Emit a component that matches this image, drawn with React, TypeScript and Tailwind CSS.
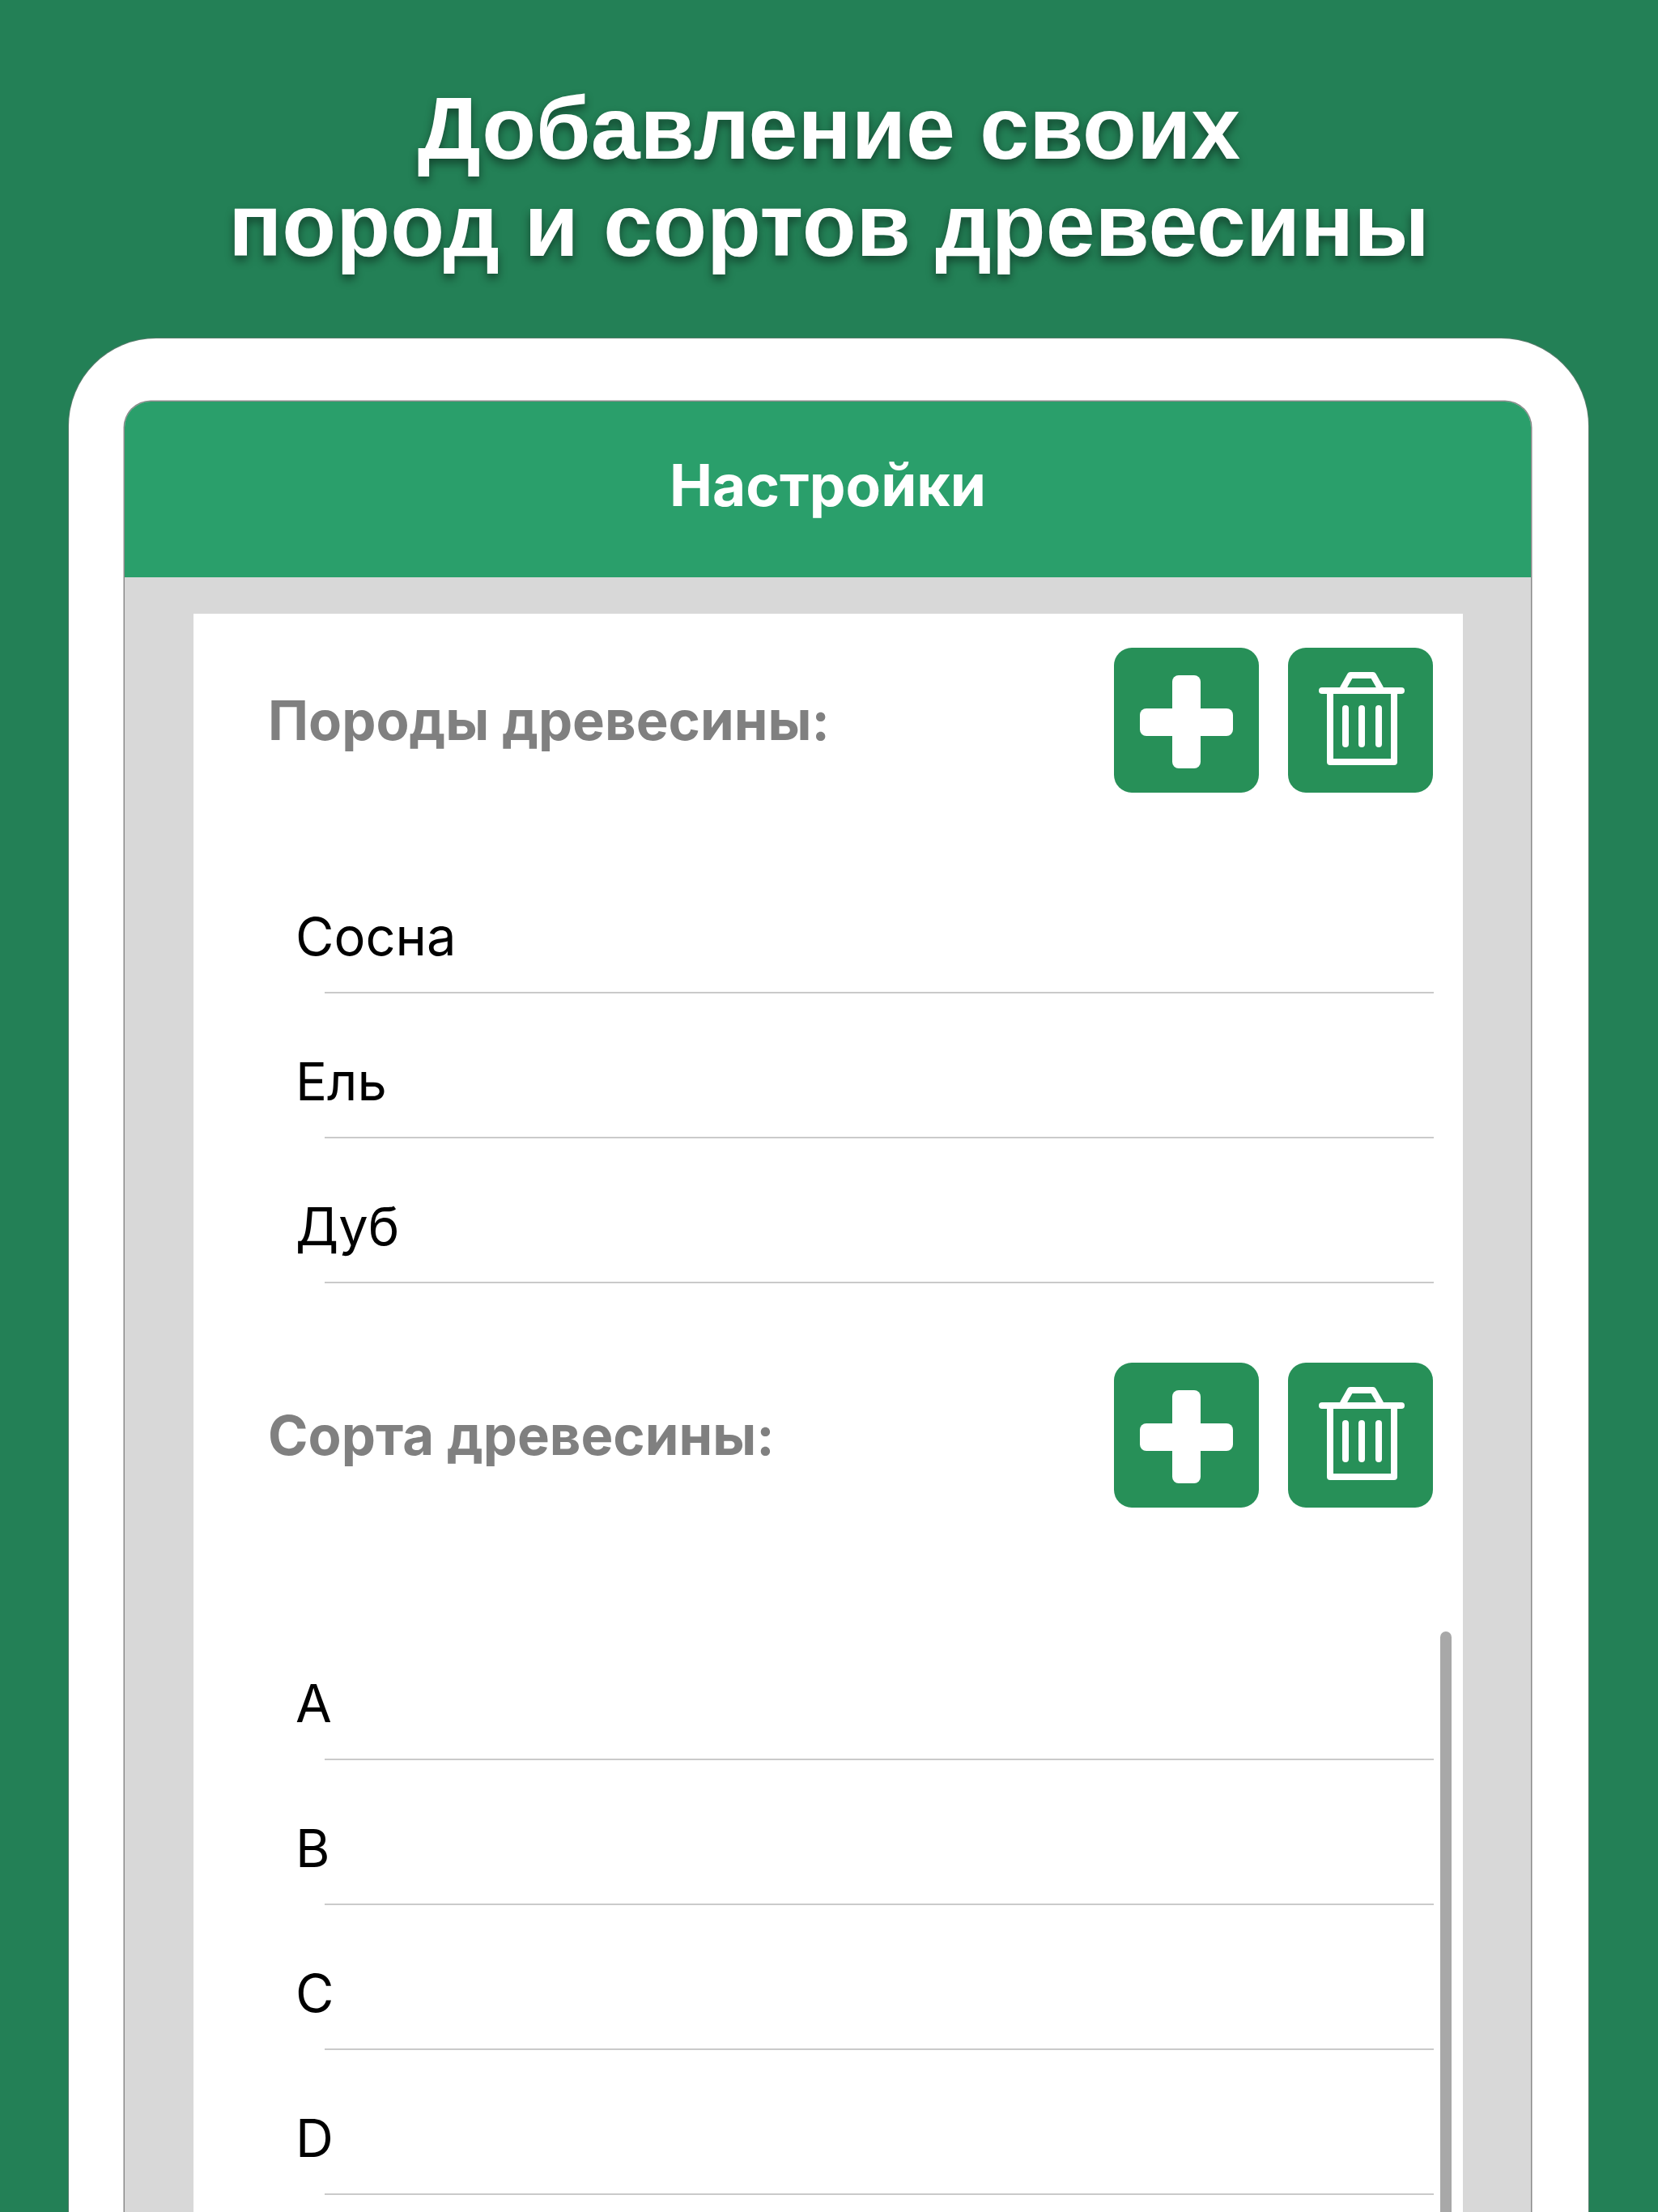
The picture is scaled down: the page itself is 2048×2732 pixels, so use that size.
const breeds = ['Сосна', 'Ель', 'Дуб']
const grades = ['A', 'B', 'C', 'D']

function PlusIcon() {
  return (
    <svg viewBox="0 0 179 179" className="w-[179px] h-[179px]" fill="#fff">
      <rect x="72" y="34" width="35" height="115" rx="8" />
      <rect x="32" y="75" width="115" height="34" rx="8" />
    </svg>
  )
}

function TrashIcon() {
  return (
    <svg viewBox="0 0 179 179" className="w-[179px] h-[179px]" fill="none" stroke="#fff" strokeWidth="8" strokeLinecap="round" strokeLinejoin="round">
      <path d="M42 53H140" />
      <path d="M52 53V141H131V53" />
      <path d="M68 50L77 34H105L114 50" />
      <path d="M71 75V119M91 75V119M112 75V119" />
    </svg>
  )
}

function SectionHeader({ title }: { title: string }) {
  return (
    <div className="flex items-center justify-between pl-[92px] pr-[37px]">
      <span className="text-[67px] leading-[72px] font-bold text-[#808080]">{title}</span>
      <div className="flex gap-[36px]">
        <button className="w-[179px] h-[179px] rounded-[22px] bg-[#279058]">
          <PlusIcon />
        </button>
        <button className="w-[179px] h-[179px] rounded-[22px] bg-[#279058]">
          <TrashIcon />
        </button>
      </div>
    </div>
  )
}

function Row({ label }: { label: string }) {
  return (
    <div className="h-[179px] ml-[162px] mr-[36px] pt-[40px] border-b-2 border-[#cacaca] flex items-center">
      <span className="-ml-[36px] text-[65px] leading-[72px] text-black">{label}</span>
    </div>
  )
}

export default function App() {
  return (
    <div className="w-[2048px] h-[2732px] overflow-hidden bg-[#238056] font-['Inter',sans-serif]">
      {/* Title */}
      <div className="h-[418px] pt-[98px] text-center font-['Liberation_Sans',sans-serif] font-bold text-[109.5px] leading-[120px] text-white [text-shadow:0_6px_12px_rgba(0,0,0,0.45)]">
        <div>Добавление своих</div>
        <div>пород и сортов древесины</div>
      </div>

      {/* Device frame */}
      <div className="ml-[85px] mr-[86px] h-[2400px] bg-white rounded-t-[108px] pl-[69px] pr-[71px] pt-[78px] shadow-[0_0_0_1px_rgba(120,120,120,0.6)]">
        <div className="h-[2300px] bg-[#d8d8d8] rounded-t-[32px] shadow-[0_0_0_1.5px_#8a8a8a] overflow-hidden">
          <div className="h-[217px] pb-[11px] bg-[#2a9f6b] flex items-center justify-center text-[71px] font-bold text-white">
            Настройки
          </div>

          <div className="mt-[45px] ml-[85px] mr-[84px] h-[2000px] bg-white pt-[42px]">
            <SectionHeader title="Породы древесины:" />
            <div className="mt-[69px]">
              {breeds.map((b) => (
                <Row key={b} label={b} />
              ))}
            </div>

            <div className="mt-[98px]">
              <SectionHeader title="Сорта древесины:" />
            </div>
            <div className="relative mt-[133px]">
              <div className="absolute right-[14px] top-[20px] w-[14px] h-[1000px] rounded-full bg-[#a8a8a8]" />
              {grades.map((g) => (
                <Row key={g} label={g} />
              ))}
            </div>
          </div>
        </div>
      </div>
    </div>
  )
}
